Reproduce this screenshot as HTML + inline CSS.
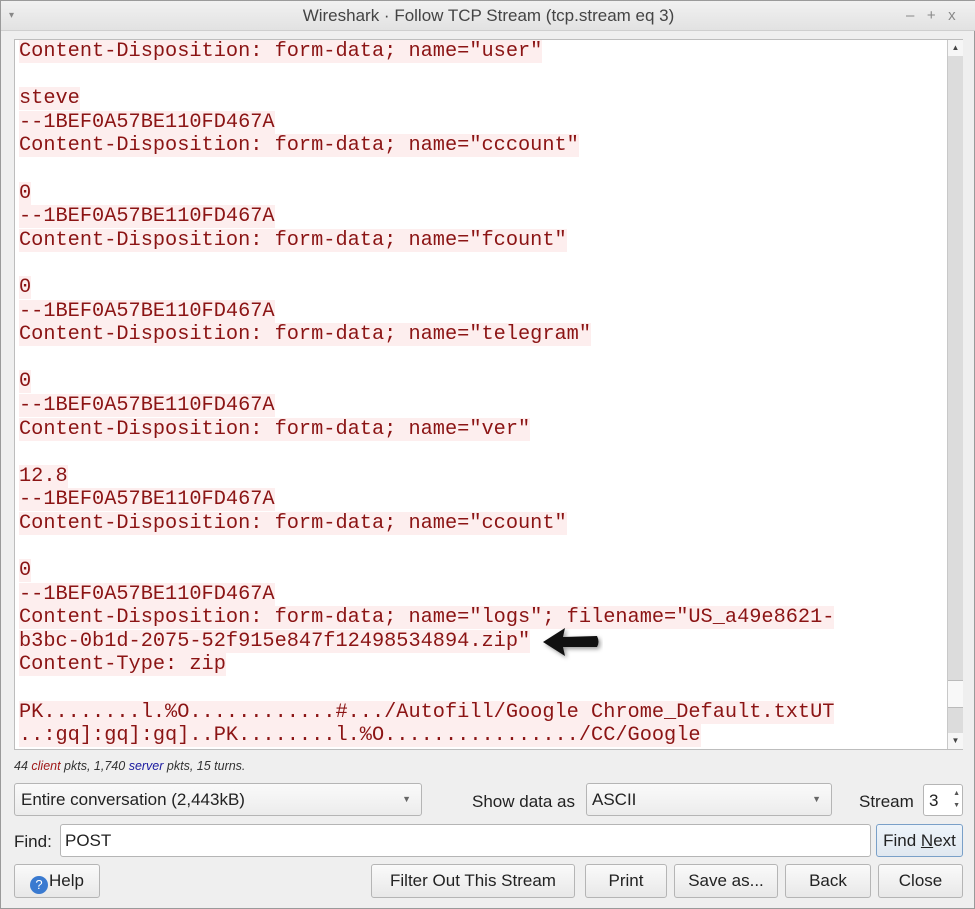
<!DOCTYPE html>
<html><head><style>
*{box-sizing:border-box;margin:0;padding:0}
body{width:975px;height:909px;background:#efefef;font-family:"Liberation Sans",sans-serif;position:relative;overflow:hidden;border:1px solid #9a9a9a}
.title{position:absolute;left:0;top:0;width:975px;height:30px;background:linear-gradient(#f1f1f1,#e2e2e2);border-bottom:1px solid #cfcfcf;text-align:center;font-size:17px;line-height:30px;color:#444}
.tb{position:absolute;top:0;font-size:15px;line-height:30px;color:#888}
.box{position:absolute;left:13px;top:38px;width:949px;height:711px;background:#fff;border:1px solid #bdbdbd}
.text{position:absolute;left:4px;top:0px;font-family:"Liberation Mono",monospace;font-size:20.3px;line-height:23.6px;color:#8b1414;white-space:pre}
.text span{background:#fdeeee}
.sb{position:absolute;left:932px;top:0;width:16px;height:709px;background:#dcdcdc;border-left:1px solid #c8c8c8}
.arr{position:absolute;left:0;width:15px;height:16px;background:#f6f6f6;font-size:8px;text-align:center;line-height:16px;color:#444}
.thumb{position:absolute;left:0;top:640px;width:15px;height:28px;background:#f8f8f8;border-top:1px solid #bbb;border-bottom:1px solid #bbb}
.stat{position:absolute;left:13px;top:758px;font-size:12.5px;font-style:italic;color:#333}
.ctl{position:absolute;border:1px solid #b5b5b5;border-radius:3px;background:linear-gradient(#fafafa,#ececec);font-size:17px;color:#222;line-height:31px}
.lbl{position:absolute;font-size:17px;color:#222}
.btn{position:absolute;top:863px;height:34px;border:1px solid #b5b5b5;border-radius:3px;background:linear-gradient(#fafafa,#e8e8e8);font-size:17px;line-height:32px;text-align:center;color:#222}
</style></head><body>
<div class="title">Wireshark · Follow TCP Stream (tcp.stream eq 3)</div>
<div class="tb" style="left:8px;font-size:10px">▾</div>
<div class="tb" style="left:905px">–&nbsp;&nbsp;&nbsp;+&nbsp;&nbsp;&nbsp;x</div>
<div class="box">
<div class="text"><span>Content-Disposition: form-data; name="user"</span>

<span>steve</span>
<span>--1BEF0A57BE110FD467A</span>
<span>Content-Disposition: form-data; name="cccount"</span>

<span>0</span>
<span>--1BEF0A57BE110FD467A</span>
<span>Content-Disposition: form-data; name="fcount"</span>

<span>0</span>
<span>--1BEF0A57BE110FD467A</span>
<span>Content-Disposition: form-data; name="telegram"</span>

<span>0</span>
<span>--1BEF0A57BE110FD467A</span>
<span>Content-Disposition: form-data; name="ver"</span>

<span>12.8</span>
<span>--1BEF0A57BE110FD467A</span>
<span>Content-Disposition: form-data; name="ccount"</span>

<span>0</span>
<span>--1BEF0A57BE110FD467A</span>
<span>Content-Disposition: form-data; name="logs"; filename="US_a49e8621-</span>
<span>b3bc-0b1d-2075-52f915e847f12498534894.zip"</span>
<span>Content-Type: zip</span>

<span>PK........l.%O............#.../Autofill/Google Chrome_Default.txtUT</span>
<span>..:gq]:gq]:gq]..PK........l.%O................/CC/Google</span></div>
<svg style="position:absolute;left:526px;top:586px" width="62" height="38"><path d="M2 16 L24 2 L22 11 L56 10 Q59 16 56 21 L22 21 L24 30 Z" fill="#111" style="filter:drop-shadow(2px 2px 2px rgba(0,0,0,.4))"/></svg>
<div class="sb"><div class="arr" style="top:0">▲</div><div class="thumb"></div><div class="arr" style="top:693px">▼</div></div>
</div>
<div class="stat">44 <span style="color:#a01818">client</span> pkts, 1,740 <span style="color:#1a1aa0">server</span> pkts, 15 turns.</div>
<div class="ctl" style="left:13px;top:782px;width:408px;height:33px;padding-left:6px">Entire conversation (2,443kB)<span style="position:absolute;right:10px;font-size:9px;color:#666">▼</span></div>
<div class="lbl" style="left:471px;top:791px">Show data as</div>
<div class="ctl" style="left:585px;top:782px;width:246px;height:33px;padding-left:5px">ASCII<span style="position:absolute;right:10px;font-size:9px;color:#666">▼</span></div>
<div class="lbl" style="left:858px;top:791px">Stream</div>
<div class="ctl" style="left:922px;top:783px;width:40px;height:32px;background:#fff;padding-left:5px">3<span style="position:absolute;right:2px;top:3px;font-size:7px;line-height:12px;color:#555">▲<br>▼</span></div>
<div class="lbl" style="left:13px;top:831px">Find:</div>
<div class="ctl" style="left:59px;top:823px;width:811px;height:33px;background:#fff;padding-left:4px">POST</div>
<div class="btn" style="left:875px;top:823px;width:87px;height:33px;border-color:#7aa0c8;background:linear-gradient(#eef4fa,#e0e8f0)">Find <u>N</u>ext</div>
<div class="btn" style="left:13px;width:86px"><span style="display:inline-block;width:18px;height:18px;border-radius:50%;background:#3a7ad0;color:#fff;font-size:13px;line-height:18px;vertical-align:-3px;margin-right:1px">?</span>Help</div>
<div class="btn" style="left:370px;width:204px">Filter Out This Stream</div>
<div class="btn" style="left:584px;width:82px">Print</div>
<div class="btn" style="left:673px;width:104px">Save as...</div>
<div class="btn" style="left:784px;width:86px">Back</div>
<div class="btn" style="left:877px;width:85px">Close</div>
</body></html>
